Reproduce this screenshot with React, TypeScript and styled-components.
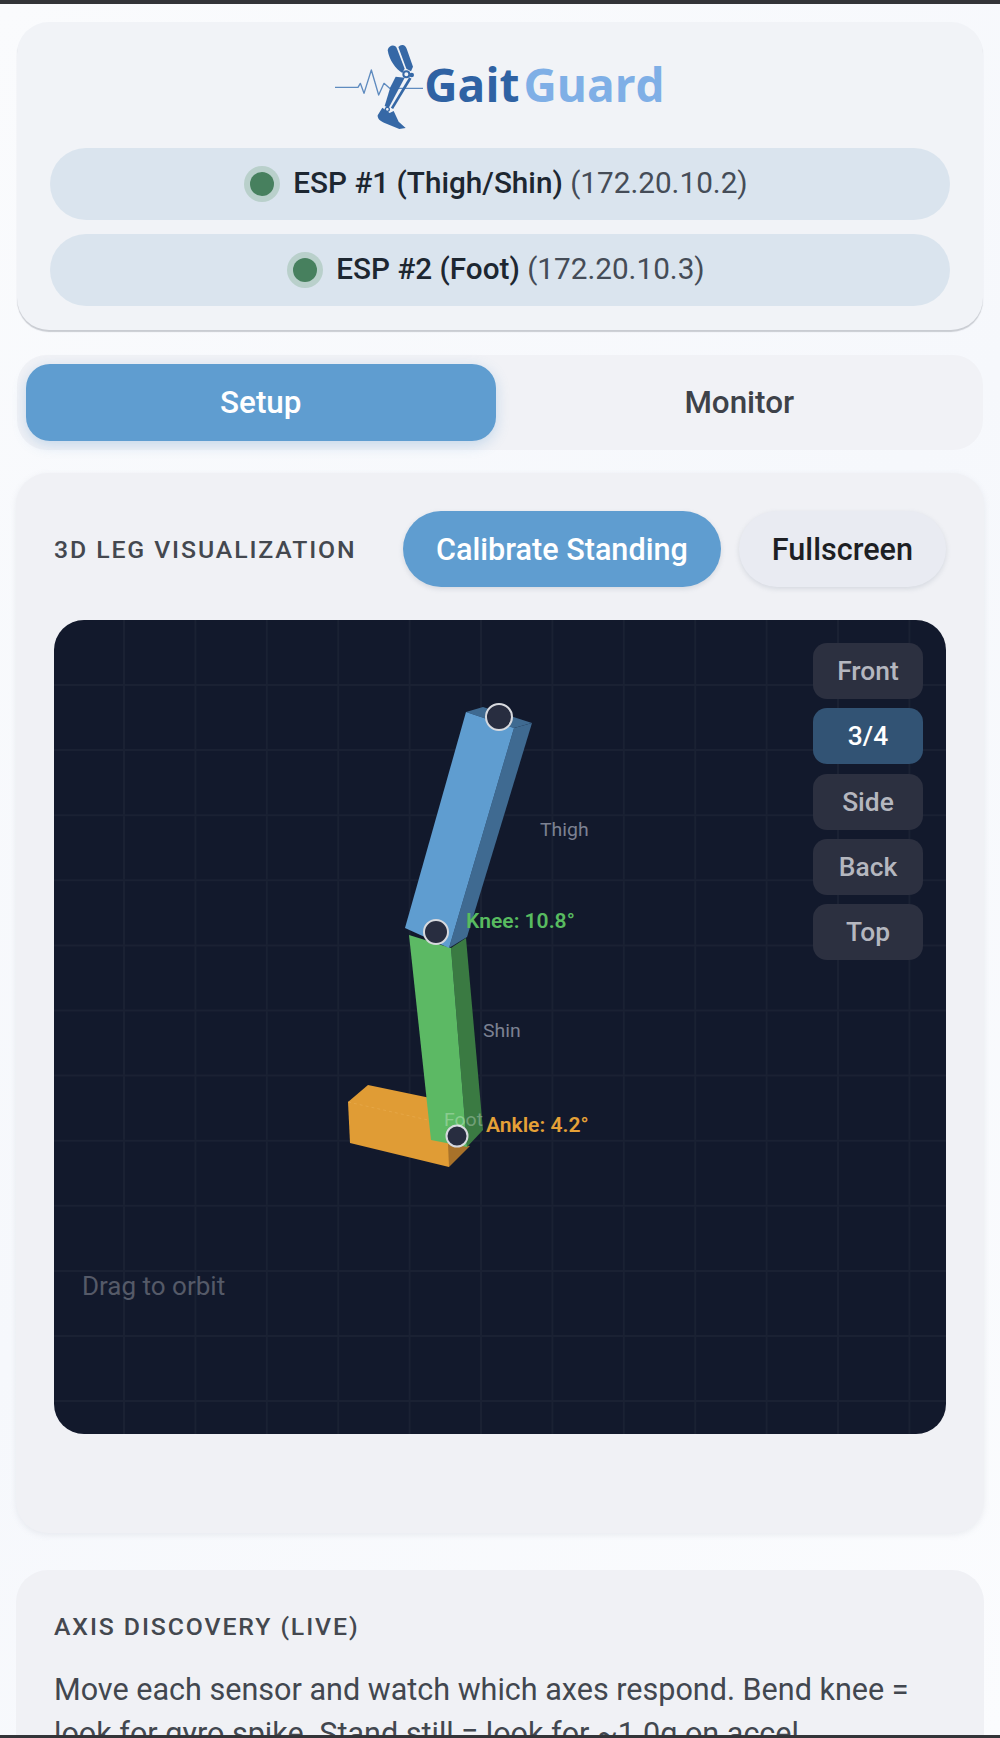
import React from 'react';
import styled, { createGlobalStyle } from 'styled-components';

const Global = createGlobalStyle`
  html, body { margin: 0; padding: 0; background: #f8fafd; }
  * { box-sizing: border-box; }
`;

const Page = styled.div`
  position: relative;
  width: 1000px;
  height: 1738px;
  overflow: hidden;
  background: linear-gradient(135deg, #fafbfd 0%, #f6f8fc 50%, #fbfcfe 100%);
  font-family: Roboto, "Liberation Sans", sans-serif;
  color: #1f2933;
`;
const TopBar = styled.div`
  height: 4px;
  background: #333438;
`;
const BottomBar = styled.div`
  position: absolute;
  left: 0;
  right: 0;
  bottom: 0;
  height: 3px;
  background: #333438;
`;
const Main = styled.div`
  padding: 18px 16px 0;
  display: flex;
  flex-direction: column;
`;
const HeaderCard = styled.header`
  height: 308px;
  margin: 0 1px;
  padding: 23px 33px 0 33px;
  border-radius: 32px;
  background: #f1f3f7;
  box-shadow: 0 2px 1px #c9ccd2;
  display: flex;
  flex-direction: column;
`;
const LogoRow = styled.div`
  height: 84px;
  margin-bottom: 19px;
  display: flex;
  justify-content: center;
  align-items: flex-start;
`;
const LogoMark = styled.svg`
  width: 90px;
  height: 84px;
  flex: none;
`;
const LogoText = styled.div`
  margin-left: -1px;
  margin-top: -3px;
  height: 84px;
  display: flex;
  align-items: center;
  gap: 4px;
  font-family: "Open Sans", sans-serif;
  font-weight: 700;
  font-size: 46px;
  line-height: 84px;
`;
const LogoWord = styled.span<{ $light?: boolean }>`
  color: ${p => (p.$light ? '#7fafe6' : '#2f62a3')};
`;
const Pill = styled.div`
  height: 72px;
  margin-bottom: 14px;
  padding-right: 8px;
  border-radius: 36px;
  background: #dae4ee;
  display: flex;
  align-items: center;
  justify-content: center;
  gap: 13px;
  font-size: 29.7px;
`;
const Dot = styled.span`
  width: 24px;
  height: 24px;
  border-radius: 50%;
  background: #47805e;
  box-shadow: 0 0 0 6px #b9d0cb;
  margin: 0 6px;
  flex: none;
`;
const PillLabel = styled.span`
  padding-bottom: 4px;
`;
const PillName = styled.span`
  font-weight: 500;
  color: #1d2731;
`;
const PillIp = styled.span`
  font-weight: 400;
  color: #454c57;
`;
const Tabs = styled.nav`
  margin: 25px 1px 0;
  height: 95px;
  padding: 9px;
  border-radius: 30px;
  background: #f1f2f6;
  display: grid;
  grid-template-columns: 1fr 1fr;
  gap: 9px;
`;
const Tab = styled.div<{ $active?: boolean }>`
  border-radius: 24px;
  display: flex;
  align-items: center;
  justify-content: center;
  font-size: 31.4px;
  font-weight: 500;
  color: ${p => (p.$active ? '#fff' : '#3e4249')};
  background: ${p => (p.$active ? '#5f9dd0' : 'transparent')};
  box-shadow: ${p => (p.$active ? '0 4px 14px rgba(95,157,208,.3)' : 'none')};
`;
const Card = styled.section`
  margin-top: 23px;
  height: 1060px;
  padding: 38px 38px 0;
  border-radius: 32px;
  background: #f0f1f5;
  box-shadow: 0 2px 6px rgba(150, 155, 170, .16);
`;
const CardHead = styled.div`
  height: 76px;
  display: flex;
  align-items: center;
  gap: 18px;
`;
const Heading = styled.h2`
  margin: 0;
  font-size: 24.8px;
  font-weight: 500;
  letter-spacing: 1.9px;
  color: #44484f;
  text-transform: uppercase;
`;
const HeadTitle = styled(Heading)`
  flex: 1;
  white-space: nowrap;
`;
const Action = styled.button<{ $primary?: boolean }>`
  height: 76px;
  padding: 0 33px;
  border: 0;
  flex: none;
  border-radius: 38px;
  font: 500 30.6px Roboto, sans-serif;
  color: ${p => (p.$primary ? '#fff' : '#1d1f24')};
  background: ${p => (p.$primary ? '#5f9dd0' : '#e9ebf2')};
  box-shadow: 0 2px 5px rgba(120, 130, 150, .22);
`;
const Viewport = styled.div`
  position: relative;
  margin-top: 33px;
  height: 814px;
  border-radius: 30px;
  overflow: hidden;
  background: #12192c;
`;
const Scene = styled.svg`
  display: block;
  width: 892px;
  height: 814px;
`;
const ViewButtons = styled.div`
  position: absolute;
  top: 23px;
  right: 23px;
  width: 110px;
  display: flex;
  flex-direction: column;
  gap: 9.25px;
`;
const ViewButton = styled.div<{ $active?: boolean }>`
  height: 56px;
  border-radius: 14px;
  display: flex;
  align-items: center;
  justify-content: center;
  font-size: 26.4px;
  font-weight: 500;
  color: ${p => (p.$active ? '#fff' : '#b5b7bf')};
  background: ${p => (p.$active ? '#325374' : '#2c3040')};
`;
const OrbitHint = styled.div`
  position: absolute;
  left: 28px;
  top: 651px;
  font-size: 26px;
  color: #555a68;
`;
const NextCard = styled.section`
  margin-top: 37px;
  height: 400px;
  padding: 42px 38px 0;
  border-radius: 32px;
  background: #f0f1f5;
`;
const Body = styled.p`
  margin: 27px 0 0;
  font-size: 30.55px;
  line-height: 44px;
  color: #42474f;
`;

const ox = 54;
const oy = 620;
const pts = (list: number[][]) => list.map(([x, y]) => `${x - ox},${y - oy}`).join(' ');
const vLines = Array.from({ length: 12 }, (_, i) => 70 + i * 71.4);
const hLines = Array.from({ length: 13 }, (_, i) => 65 + i * 65.1);

const faces: { fill: string; points: number[][] }[] = [
  { fill: '#e09c35', points: [[348, 1102], [368, 1085], [440, 1100], [449, 1120], [449, 1167], [350, 1143]] },
  { fill: '#a8722a', points: [[448, 1144], [470, 1146], [449, 1167]] },
  { fill: '#3a7a42', points: [[451, 948], [466, 938], [483, 1130], [467, 1147]] },
  { fill: '#5cb964', points: [[409, 935], [451, 948], [467, 1147], [431, 1140]] },
  { fill: '#3f6a91', points: [[466, 712], [483, 707], [532, 723], [514, 728]] },
  { fill: '#3f6a91', points: [[514, 728], [532, 723], [467, 937], [449, 948]] },
  { fill: '#5f9dd0', points: [[466, 712], [514, 728], [449, 948], [405, 928]] },
];
const joints = [
  { x: 499, y: 717, r: 13 },
  { x: 436, y: 932, r: 12 },
  { x: 457, y: 1136, r: 10.5 },
];
const labels = [
  { x: 540, y: 836, text: 'Thigh', fill: '#7c8192', weight: 400, size: 18 },
  { x: 483, y: 1037, text: 'Shin', fill: '#7c8192', weight: 400, size: 18 },
  { x: 444, y: 1126, text: 'Foot', fill: 'rgba(255,255,255,.3)', weight: 400, size: 18 },
  { x: 466, y: 928, text: 'Knee: 10.8°', fill: '#58bb60', weight: 600, size: 19.5 },
  { x: 486, y: 1132, text: 'Ankle: 4.2°', fill: '#e5a137', weight: 600, size: 19.5 },
];

const Leg3D = () => (
  <Scene viewBox="0 0 892 814">
    {vLines.map(x => <line key={x} x1={x} x2={x} y1={0} y2={814} stroke="#1a2133" strokeWidth={2} />)}
    {hLines.map(y => <line key={y} x1={0} x2={892} y1={y} y2={y} stroke="#1a2133" strokeWidth={2} />)}
    {faces.map((f, i) => <polygon key={i} points={pts(f.points)} fill={f.fill} />)}
    <line x1={348 - ox} y1={1102 - oy} x2={428 - ox} y2={1120 - oy} stroke="#eaae52" strokeWidth={1} strokeDasharray="3 3" opacity={0.6} />
    {joints.map((j, i) => (
      <circle key={i} cx={j.x - ox} cy={j.y - oy} r={j.r} fill="#282d40" stroke="#d7d9de" strokeWidth={2} />
    ))}
    {labels.map(l => (
      <text
        key={l.text}
        transform={`translate(${l.x - ox} ${l.y - oy}) scale(1.08 1)`}
        fill={l.fill}
        fontSize={l.size}
        fontWeight={l.weight}
        fontFamily="Roboto, sans-serif"
      >
        {l.text}
      </text>
    ))}
  </Scene>
);

const Logo = () => (
  <LogoRow>
    <LogoMark viewBox="21 15 270 252">
      <path d="M21 142 H90 L97 130 L108 160 L130 90 L152 165 L168 130 L185 145 H285" fill="none" stroke="#5f8bbf" strokeWidth="4" strokeLinejoin="round" />
      <path d="M179 30 C183 13 203 12 207 26 L230 86 L223 99 C204 88 183 60 179 30 Z" fill="#3668a6" />
      <path d="M211 21 C220 11 232 14 236 26 L255 80 L249 94 L235 86 Z" fill="#3668a6" />
      <path d="M203 110 L230 113 L199 172 L182 204 L170 198 L187 142 Z" fill="#3668a6" />
      <path d="M247 114 L192 205" fill="none" stroke="#3668a6" strokeWidth="8" />
      <path d="M163 203 L149 226 C148 236 157 244 168 248 L214 267 L233 264 L212 245 L197 213 L185 219 Z" fill="#3668a6" />
      <circle cx="235" cy="103" r="9" fill="#f1f3f7" stroke="#3668a6" strokeWidth="6" />
      <circle cx="251" cy="105" r="7" fill="#3668a6" />
      <circle cx="178" cy="208" r="6" fill="#f1f3f7" stroke="#3668a6" strokeWidth="4" />
    </LogoMark>
    <LogoText>
      <LogoWord>Gait</LogoWord>
      <LogoWord $light>Guard</LogoWord>
    </LogoText>
  </LogoRow>
);

export default function App() {
  return (
    <Page>
      <Global />
      <TopBar />
      <Main>
        <HeaderCard>
          <Logo />
          <Pill><Dot /><PillLabel><PillName>ESP #1 (Thigh/Shin)</PillName> <PillIp>(172.20.10.2)</PillIp></PillLabel></Pill>
          <Pill><Dot /><PillLabel><PillName>ESP #2 (Foot)</PillName> <PillIp>(172.20.10.3)</PillIp></PillLabel></Pill>
        </HeaderCard>
        <Tabs>
          <Tab $active>Setup</Tab>
          <Tab>Monitor</Tab>
        </Tabs>
        <Card>
          <CardHead>
            <HeadTitle>3D Leg Visualization</HeadTitle>
            <Action $primary>Calibrate Standing</Action>
            <Action>Fullscreen</Action>
          </CardHead>
          <Viewport>
            <Leg3D />
            <ViewButtons>
              <ViewButton>Front</ViewButton>
              <ViewButton $active>3/4</ViewButton>
              <ViewButton>Side</ViewButton>
              <ViewButton>Back</ViewButton>
              <ViewButton>Top</ViewButton>
            </ViewButtons>
            <OrbitHint>Drag to orbit</OrbitHint>
          </Viewport>
        </Card>
        <NextCard>
          <Heading>Axis Discovery (Live)</Heading>
          <Body>Move each sensor and watch which axes respond. Bend knee = look for gyro spike. Stand still = look for ~1.0g on accel.</Body>
        </NextCard>
      </Main>
      <BottomBar />
    </Page>
  );
}
